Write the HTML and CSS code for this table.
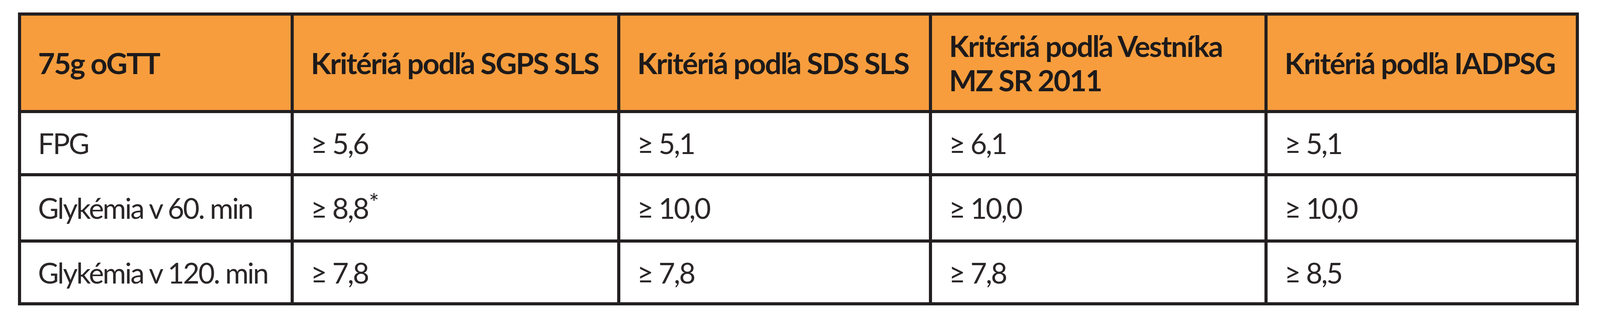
FILE: index.html
```html
<!DOCTYPE html>
<html lang="sk">
<head>
<meta charset="utf-8">
<title>Kritériá 75g oGTT</title>
<link rel="stylesheet" href="styles.css">
</head>
<body>
<div class="crit" role="table" aria-label="Diagnostické kritériá 75g oGTT">
  <div class="cell th" role="columnheader">75g oGTT</div>
  <div class="cell th" role="columnheader">Kritériá podľa SGPS SLS</div>
  <div class="cell th" role="columnheader">Kritériá podľa SDS SLS</div>
  <div class="cell th" role="columnheader"><span>Kritériá podľa Vestníka<br>MZ SR 2011</span></div>
  <div class="cell th" role="columnheader">Kritériá podľa IADPSG</div>

  <div class="cell td" role="cell">FPG</div>
  <div class="cell td" role="cell">≥ 5,6</div>
  <div class="cell td" role="cell">≥ 5,1</div>
  <div class="cell td" role="cell">≥ 6,1</div>
  <div class="cell td" role="cell">≥ 5,1</div>

  <div class="cell td" role="cell">Glykémia v 60. min</div>
  <div class="cell td" role="cell"><span>≥ 8,8<sup>*</sup></span></div>
  <div class="cell td" role="cell">≥ 10,0</div>
  <div class="cell td" role="cell">≥ 10,0</div>
  <div class="cell td" role="cell">≥ 10,0</div>

  <div class="cell td" role="cell">Glykémia v 120. min</div>
  <div class="cell td" role="cell">≥ 7,8</div>
  <div class="cell td" role="cell">≥ 7,8</div>
  <div class="cell td" role="cell">≥ 7,8</div>
  <div class="cell td" role="cell">≥ 8,5</div>
</div>
</body>
</html>
```

FILE: styles.css
```css
html, body {
  margin: 0;
  padding: 0;
  background: #ffffff;
}

body {
  font-family: "Lato", "Liberation Sans", sans-serif;
  color: #231f20;
}

/* horizontal measures scale with the window (designed on a 4315px width) */
.crit {
  display: grid;
  grid-template-columns: 17.057vw 20.394vw 19.490vw 20.973vw 19.467vw;
  grid-template-rows: 250px 162px 170px 161px;
  width: max-content;
  margin: 32px 0 0 1.1124vw;
  border-top: 8px solid #231f20;
  border-left: 8px solid #231f20;
}

.cell {
  box-sizing: border-box;
  display: flex;
  align-items: center;
  padding: 0 0.4vw 0 1.066vw;
  border-right: 8px solid #231f20;
  border-bottom: 8px solid #231f20;
  white-space: nowrap;
  overflow: hidden;
}

.th {
  background: #f79d3d;
  font-weight: 700;
  font-size: 75px;
  line-height: 88px;
  letter-spacing: calc(0.7819vw - 34.58px);
  color: #1d1a1b;
}

.td {
  background: #ffffff;
  font-weight: 400;
  font-size: 73px;
  line-height: 94px;
  letter-spacing: calc(0.7562vw - 34.13px);
  color: #2a2627;
}

.td sup {
  font-size: 0.85em;
  line-height: 0;
  vertical-align: 0.3em;
  margin-left: 2px;
}
```
